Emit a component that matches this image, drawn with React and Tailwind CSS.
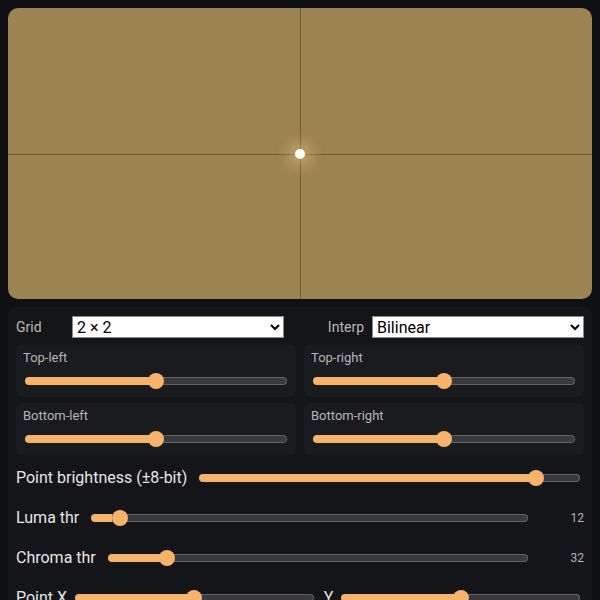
import React, { useState } from "react";

const font = { fontFamily: "Roboto, 'Noto Sans', sans-serif" };

// range input with a painted track: orange fill up to the value, grey outlined rest
const Slider = ({ min = 0, max = 100, value, onChange, className = "" }) => {
  const p = ((value - min) / (max - min)) * 100;
  return (
    <input
      type="range"
      min={min}
      max={max}
      value={value}
      onChange={(e) => onChange(Number(e.target.value))}
      style={{
        background: `linear-gradient(to right, #f6b46b ${p}%, transparent ${p}%) border-box, linear-gradient(#3a3a3d, #3a3a3d) padding-box, linear-gradient(#636366, #636366) border-box`,
      }}
      className={
        "min-w-0 h-2 appearance-none rounded-full border border-transparent cursor-pointer [&::-webkit-slider-thumb]:appearance-none [&::-webkit-slider-thumb]:w-4 [&::-webkit-slider-thumb]:h-4 [&::-webkit-slider-thumb]:rounded-full [&::-webkit-slider-thumb]:bg-[#f6b46b] " +
        className
      }
    />
  );
};

const CornerCard = ({ label, value, onChange }) => (
  <div className="bg-[#1a1b1e] rounded-md px-[7px] pt-[5px] pb-2 flex flex-col">
    <span className="text-[13px] leading-4 text-[#b4b4b4]">{label}</span>
    <div className="h-4 mt-[7px] px-0.5 flex items-center">
      <Slider value={value} onChange={onChange} className="w-full" />
    </div>
  </div>
);

const App = () => {
  const [grid, setGrid] = useState("2x2");
  const [interp, setInterp] = useState("bilinear");
  const [corners, setCorners] = useState({ tl: 50, tr: 50, bl: 50, br: 50 });
  const [bright, setBright] = useState(206);
  const [luma, setLuma] = useState(12);
  const [chroma, setChroma] = useState(32);
  const [px, setPx] = useState(50);
  const [py, setPy] = useState(50);

  const setCorner = (k) => (v) => setCorners({ ...corners, [k]: v });

  return (
    <div className="min-h-screen bg-[#0f1013] pt-2 px-2" style={font}>
      <div className="relative h-[291px] rounded-[10px] bg-[#9b8352] overflow-hidden">
        <div className="absolute top-0 bottom-0 left-[291.5px] w-px bg-[#6f5c36]" />
        <div className="absolute left-0 right-0 top-[145.5px] h-px bg-[#6f5c36]" />
        <div className="absolute left-[287px] top-[141px] w-[10px] h-[10px] rounded-full bg-white shadow-[0_0_14px_7px_rgba(255,214,150,0.4)]" />
      </div>

      <div className="mt-2 bg-[#141518] rounded-lg px-2 pt-[9px] pb-4">
        <div className="grid grid-cols-2 gap-8 items-center">
          <div className="flex items-center gap-2">
            <span className="w-12 text-[14px] text-[#b8b8b8]">Grid</span>
            <select
              value={grid}
              onChange={(e) => setGrid(e.target.value)}
              className="flex-1 h-[22px] bg-white text-black text-[16px] border border-[#8a8a8a]"
            >
              <option value="1x1">1 × 1</option>
              <option value="2x2">2 × 2</option>
              <option value="3x3">3 × 3</option>
              <option value="4x4">4 × 4</option>
            </select>
          </div>
          <div className="flex items-center gap-2">
            <span className="w-12 text-right text-[14px] text-[#b8b8b8]">Interp</span>
            <select
              value={interp}
              onChange={(e) => setInterp(e.target.value)}
              className="flex-1 h-[22px] bg-white text-black text-[16px] border border-[#8a8a8a]"
            >
              <option value="nearest">Nearest</option>
              <option value="bilinear">Bilinear</option>
              <option value="bicubic">Bicubic</option>
            </select>
          </div>
        </div>

        <div className="grid grid-cols-2 gap-x-2 gap-y-1.5 mt-[7px]">
          <CornerCard label="Top-left" value={corners.tl} onChange={setCorner("tl")} />
          <CornerCard label="Top-right" value={corners.tr} onChange={setCorner("tr")} />
          <CornerCard label="Bottom-left" value={corners.bl} onChange={setCorner("bl")} />
          <CornerCard label="Bottom-right" value={corners.br} onChange={setCorner("br")} />
        </div>

        <div className="mt-[11px] flex flex-col gap-4 text-[16px] text-[#e6e6e6]">
          <div className="h-6 flex items-center gap-3">
            <span className="whitespace-nowrap">Point brightness (±8-bit)</span>
            <Slider min={-255} max={255} value={bright} onChange={setBright} className="flex-1 mr-1" />
          </div>
          <div className="h-6 flex items-center gap-3">
            <span className="whitespace-nowrap">Luma thr</span>
            <Slider min={0} max={255} value={luma} onChange={setLuma} className="flex-1" />
            <span className="w-11 text-right text-[12px] text-[#b4b4b4]">{luma}</span>
          </div>
          <div className="h-6 flex items-center gap-3">
            <span className="whitespace-nowrap">Chroma thr</span>
            <Slider min={0} max={255} value={chroma} onChange={setChroma} className="flex-1" />
            <span className="w-11 text-right text-[12px] text-[#b4b4b4]">{chroma}</span>
          </div>
          <div className="h-6 flex items-center">
            <span className="whitespace-nowrap mr-2">Point X</span>
            <Slider value={px} onChange={setPx} className="flex-1" />
            <span className="ml-2.5 mr-2">Y</span>
            <Slider value={py} onChange={setPy} className="flex-1 mr-1" />
          </div>
        </div>
      </div>
    </div>
  );
};

export default App;
